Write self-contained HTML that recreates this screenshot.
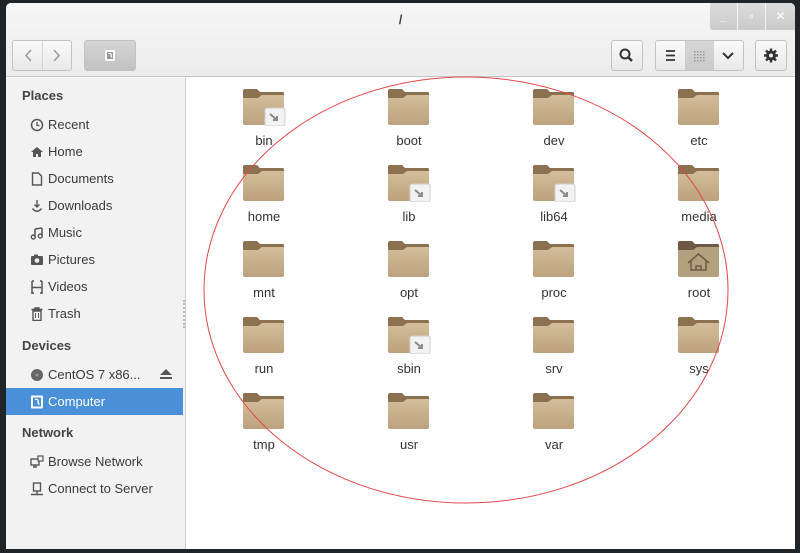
<!DOCTYPE html>
<html><head><meta charset="utf-8"><style>
*{margin:0;padding:0;box-sizing:border-box}
body{width:800px;height:553px;background:#1e2428;position:relative;overflow:hidden;font-family:"Liberation Sans","DejaVu Sans",sans-serif}
.win{position:absolute;left:6px;top:3px;width:789px;height:546px;background:#fff;border-radius:5px 5px 0 0;overflow:hidden}
.hdr{position:absolute;left:0;top:0;width:789px;height:74px;background:linear-gradient(#f6f6f6,#ececec);border-bottom:1px solid #c4c4c4}
.title{position:absolute;left:0;width:789px;top:9px;text-align:center;font-size:13px;font-weight:bold;color:#444}
.btn{position:absolute;height:31px;top:37px;border:1px solid #c2c2c2;border-radius:3px;background:linear-gradient(#fafafa,#e8e8e8)}
.side{position:absolute;left:0;top:75px;width:180px;height:471px;background:#f2f2f2;border-right:1px solid #cdcdcd}
.h{position:absolute;left:16px;font-size:13px;font-weight:bold;color:#444}
.it{position:absolute;left:42px;font-size:13px;color:#3a3a3a}
.ic{position:absolute;left:24px;width:14px;height:14px}
.f{position:absolute;width:80px;text-align:center}
.f svg{display:block;margin:0 auto}
.f span{display:block;font-size:13px;color:#333;margin-top:7px}
.wc{position:absolute;top:0;width:27px;height:27px;background:linear-gradient(#dcdcdc,#cacaca);color:#fff;font-size:12px;text-align:center;line-height:27px;font-weight:bold}
</style></head><body>
<svg width="0" height="0" style="position:absolute"><defs>
<linearGradient id="g" x1="0" y1="0" x2="0" y2="1"><stop offset="0" stop-color="#d3bd9b"/><stop offset="1" stop-color="#bca27c"/></linearGradient>
<g id="fold"><path d="M1 3 Q1 1 3 1 L15 1 L18 4 L41 4 Q42 4 42 6 L42 34 L1 34Z" fill="#8c7150"/><path d="M1 10 L16 10 L20 7 L42 7 L42 35 Q42 37 40 37 L3 37 Q1 37 1 35Z" fill="url(#g)"/></g>
<g id="lnk"><rect x="23" y="20" width="20" height="18" rx="2" fill="#f2f2f2" stroke="#cfcfcf"/><path d="M28 26 L35 32 M31 32 L35 32 L35 28" stroke="#8a8a8a" stroke-width="2" fill="none"/></g>
</defs></svg>
<div class="win">
<div class="hdr">
<div class="title">/</div>
<div class="wc" style="left:704px;border-radius:0 0 0 3px">_</div>
<div class="wc" style="left:732px">▫</div>
<div class="wc" style="left:760px;width:29px">✕</div>
<div class="btn" style="left:6px;width:60px"><div style="position:absolute;left:29px;top:0;width:1px;height:29px;background:#d4d4d4"></div>
<svg width="60" height="29" style="position:absolute;left:0;top:0"><path d="M18 9 L13 14.5 L18 20 M41 9 L46 14.5 L41 20" stroke="#999" stroke-width="1.5" fill="none"/></svg></div>
<div class="btn" style="left:78px;width:52px;background:linear-gradient(#d4d4d4,#c2c2c2)"><svg width="50" height="29"><rect x="20" y="9" width="10" height="11" rx="1" fill="#fff"/><rect x="22" y="11" width="6" height="7" fill="#999"/><path d="M23.5 12.5 Q27 12 26 15 L27 16.5" stroke="#fff" stroke-width="1.1" fill="none"/></svg></div>
<div class="btn" style="left:605px;width:32px"><svg width="30" height="29"><circle cx="13" cy="13" r="4.5" stroke="#333" stroke-width="2" fill="none"/><line x1="16.5" y1="16.5" x2="20" y2="20" stroke="#333" stroke-width="2.4"/></svg></div>
<div class="btn" style="left:649px;width:89px;overflow:hidden">
<div style="position:absolute;left:29px;top:0;width:29px;height:29px;background:linear-gradient(#d6d6d6,#cacaca)"></div>
<svg width="89" height="29" style="position:absolute;left:0;top:0"><path d="M10 10h9M10 14.5h9M10 19h9" stroke="#333" stroke-width="1.8"/>
<g fill="#999"><rect x="38" y="10" width="1.5" height="1.5"/><rect x="41" y="10" width="1.5" height="1.5"/><rect x="44" y="10" width="1.5" height="1.5"/><rect x="47" y="10" width="1.5" height="1.5"/><rect x="38" y="13" width="1.5" height="1.5"/><rect x="41" y="13" width="1.5" height="1.5"/><rect x="44" y="13" width="1.5" height="1.5"/><rect x="47" y="13" width="1.5" height="1.5"/><rect x="38" y="16" width="1.5" height="1.5"/><rect x="41" y="16" width="1.5" height="1.5"/><rect x="44" y="16" width="1.5" height="1.5"/><rect x="47" y="16" width="1.5" height="1.5"/><rect x="38" y="19" width="1.5" height="1.5"/><rect x="41" y="19" width="1.5" height="1.5"/><rect x="44" y="19" width="1.5" height="1.5"/><rect x="47" y="19" width="1.5" height="1.5"/></g>
<path d="M67 12 L72 17 L77 12" stroke="#333" stroke-width="2" fill="none"/></svg></div>
<div class="btn" style="left:749px;width:32px"><svg width="30" height="29"><circle cx="15" cy="14.5" r="5" fill="#333"/><g stroke="#333" stroke-width="2.4"><line x1="15" y1="7.5" x2="15" y2="21.5"/><line x1="8" y1="14.5" x2="22" y2="14.5"/><line x1="10" y1="9.5" x2="20" y2="19.5"/><line x1="20" y1="9.5" x2="10" y2="19.5"/></g><circle cx="15" cy="14.5" r="2" fill="#eee"/></svg></div>
</div>
<div class="side">
<div class="h" style="top:10px">Places</div>
<svg class="ic" style="top:40px" viewBox="0 0 14 14"><circle cx="7" cy="7" r="5.5" stroke="#555" stroke-width="1.5" fill="none"/><path d="M7 4v3.5h2.5" stroke="#555" stroke-width="1.3" fill="none"/></svg><div class="it" style="top:39px">Recent</div>
<svg class="ic" style="top:67px" viewBox="0 0 14 14"><path d="M1 7 L7 2 L13 7 L11 7 L11 12 L8 12 L8 9 L6 9 L6 12 L3 12 L3 7Z" fill="#555"/></svg><div class="it" style="top:66px">Home</div>
<svg class="ic" style="top:94px" viewBox="0 0 14 14"><path d="M2.5 1h6l3 3v9h-9z" stroke="#555" stroke-width="1.4" fill="none"/></svg><div class="it" style="top:93px">Documents</div>
<svg class="ic" style="top:121px" viewBox="0 0 14 14"><path d="M7 1v7M4.5 5.5L7 8l2.5-2.5M2.5 9.5Q7 15 11.5 9.5" stroke="#555" stroke-width="1.4" fill="none"/></svg><div class="it" style="top:120px">Downloads</div>
<svg class="ic" style="top:148px" viewBox="0 0 14 14"><path d="M5 3v8M12 2v8M5 3l7-1" stroke="#555" stroke-width="1.5" fill="none"/><circle cx="3.3" cy="11" r="2" stroke="#555" stroke-width="1.4" fill="none"/><circle cx="10.3" cy="10" r="2" stroke="#555" stroke-width="1.4" fill="none"/></svg><div class="it" style="top:147px">Music</div>
<svg class="ic" style="top:175px" viewBox="0 0 14 14"><rect x="1" y="3" width="12" height="9" rx="1" fill="#555"/><rect x="4" y="1.5" width="4" height="2" fill="#555"/><circle cx="7" cy="7.5" r="2.3" fill="#f2f2f2"/></svg><div class="it" style="top:174px">Pictures</div>
<svg class="ic" style="top:202px" viewBox="0 0 14 14"><path d="M2 1v13M12 1v13M2 7.5h10M2 1h2M2 13h2M10 1h2M10 13h2" stroke="#555" stroke-width="1.5" fill="none"/></svg><div class="it" style="top:201px">Videos</div>
<svg class="ic" style="top:229px" viewBox="0 0 14 14"><path d="M1.5 2.5h11M5 2.5V1h4v1.5M3 4h8v9.5H3z" stroke="#555" stroke-width="1.4" fill="none"/><path d="M5.5 6v5M8.5 6v5" stroke="#555" stroke-width="1"/></svg><div class="it" style="top:228px">Trash</div>
<div class="h" style="top:260px">Devices</div>
<svg class="ic" style="top:290px" viewBox="0 0 14 14"><circle cx="7" cy="7" r="6" fill="#666"/><circle cx="7" cy="7" r="1.5" fill="#999"/></svg><div class="it" style="top:289px">CentOS 7 x86...</div>
<svg style="position:absolute;left:153px;top:290px" width="14" height="12"><path d="M1 7L7 1l6 6z M1 9h12v2H1z" fill="#555"/></svg>
<div style="position:absolute;left:0;top:310px;width:177px;height:27px;background:#4a90d9"></div>
<svg class="ic" style="top:317px" viewBox="0 0 14 14"><rect x="1" y="0.5" width="12" height="13" rx="1" fill="#fff"/><rect x="3" y="2.5" width="8" height="9" fill="#4a90d9"/><path d="M5 4.5Q9 3.5 8 8L9.5 9.5" stroke="#fff" stroke-width="1.3" fill="none"/></svg><div class="it" style="top:316px;color:#fff">Computer</div>
<div class="h" style="top:347px">Network</div>
<svg class="ic" style="top:377px" viewBox="0 0 14 14"><rect x="1" y="4" width="8" height="6" stroke="#555" stroke-width="1.4" fill="none"/><path d="M3 12h4M5 10v2" stroke="#555" stroke-width="1.4"/><rect x="8" y="1" width="5" height="5" stroke="#555" stroke-width="1.2" fill="#f2f2f2"/></svg><div class="it" style="top:376px">Browse Network</div>
<svg class="ic" style="top:404px" viewBox="0 0 14 14"><rect x="3.5" y="1" width="7" height="8" stroke="#555" stroke-width="1.4" fill="none"/><path d="M7 9v3M1 12.5h12" stroke="#555" stroke-width="1.4"/></svg><div class="it" style="top:403px">Connect to Server</div>
<div style="position:absolute;left:177px;top:222px;width:2px;height:28px;border-left:2px dotted #bbb"></div>
</div>
</div>
<div style="position:absolute;left:6px;top:3px">
<div class="f" style="left:218px;top:85px"><svg width="44" height="38"><use href="#fold"/><use href="#lnk"/></svg><span>bin</span></div>
<div class="f" style="left:363px;top:85px"><svg width="44" height="38"><use href="#fold"/></svg><span>boot</span></div>
<div class="f" style="left:508px;top:85px"><svg width="44" height="38"><use href="#fold"/></svg><span>dev</span></div>
<div class="f" style="left:653px;top:85px"><svg width="44" height="38"><use href="#fold"/></svg><span>etc</span></div>
<div class="f" style="left:218px;top:161px"><svg width="44" height="38"><use href="#fold"/></svg><span>home</span></div>
<div class="f" style="left:363px;top:161px"><svg width="44" height="38"><use href="#fold"/><use href="#lnk"/></svg><span>lib</span></div>
<div class="f" style="left:508px;top:161px"><svg width="44" height="38"><use href="#fold"/><use href="#lnk"/></svg><span>lib64</span></div>
<div class="f" style="left:653px;top:161px"><svg width="44" height="38"><use href="#fold"/></svg><span>media</span></div>
<div class="f" style="left:218px;top:237px"><svg width="44" height="38"><use href="#fold"/></svg><span>mnt</span></div>
<div class="f" style="left:363px;top:237px"><svg width="44" height="38"><use href="#fold"/></svg><span>opt</span></div>
<div class="f" style="left:508px;top:237px"><svg width="44" height="38"><use href="#fold"/></svg><span>proc</span></div>
<div class="f" style="left:653px;top:237px"><svg width="44" height="38"><path d="M1 3 Q1 1 3 1 L15 1 L18 4 L41 4 Q42 4 42 6 L42 34 L1 34Z" fill="#6e5a44"/><path d="M1 10 L16 10 L20 7 L42 7 L42 35 Q42 37 40 37 L3 37 Q1 37 1 35Z" fill="#b3a07f"/><path d="M11 23 L21.5 14 L32 23 M14 21v9h15v-9 M19 30v-4h5v4" stroke="#6e5a44" stroke-width="1.5" fill="none"/></svg><span>root</span></div>
<div class="f" style="left:218px;top:313px"><svg width="44" height="38"><use href="#fold"/></svg><span>run</span></div>
<div class="f" style="left:363px;top:313px"><svg width="44" height="38"><use href="#fold"/><use href="#lnk"/></svg><span>sbin</span></div>
<div class="f" style="left:508px;top:313px"><svg width="44" height="38"><use href="#fold"/></svg><span>srv</span></div>
<div class="f" style="left:653px;top:313px"><svg width="44" height="38"><use href="#fold"/></svg><span>sys</span></div>
<div class="f" style="left:218px;top:389px"><svg width="44" height="38"><use href="#fold"/></svg><span>tmp</span></div>
<div class="f" style="left:363px;top:389px"><svg width="44" height="38"><use href="#fold"/></svg><span>usr</span></div>
<div class="f" style="left:508px;top:389px"><svg width="44" height="38"><use href="#fold"/></svg><span>var</span></div>
</div>
<svg style="position:absolute;left:6px;top:3px;pointer-events:none" width="789" height="546"><ellipse cx="460" cy="287" rx="262" ry="213" stroke="#e04848" stroke-width="1" fill="none"/></svg>
</body></html>
